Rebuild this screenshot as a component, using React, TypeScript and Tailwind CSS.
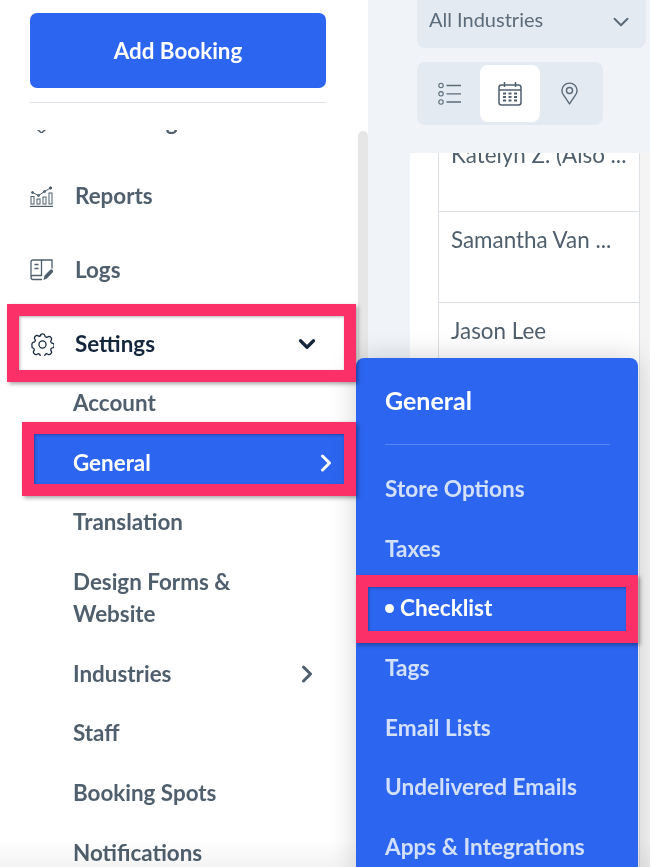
import { ChevronDown, ChevronRight } from "lucide-react";

const font = "font-['Lato','Noto_Sans',sans-serif]";

const subItems = ["Account", "General", "Translation", "Design Forms & Website", "Industries", "Staff", "Booking Spots", "Notifications"];
const flyoutItems = ["Store Options", "Taxes", "Checklist", "Tags", "Email Lists", "Undelivered Emails", "Apps & Integrations"];

function ReportsIcon() {
  return (
    <svg width="23" height="21" viewBox="0 0 23 21" fill="none" stroke="#4f5f6d" strokeWidth="1">
      <path d="M0 20.4h23" strokeWidth="1.2" />
      <rect x="1" y="10.5" width="3" height="7.5" />
      <rect x="7" y="13" width="3" height="5" />
      <rect x="13" y="11" width="3" height="7" />
      <rect x="19" y="7" width="3" height="11" />
      <path d="M2.5 6.5 8.5 9.5 14.5 5.5 20.5 2" />
      <circle cx="2.5" cy="6.5" r="1" fill="#4f5f6d" />
      <circle cx="8.5" cy="9.5" r="1" fill="#4f5f6d" />
      <circle cx="14.5" cy="5.5" r="1" fill="#4f5f6d" />
      <circle cx="20.5" cy="2" r="1.2" fill="#4f5f6d" />
    </svg>
  );
}

function LogsIcon() {
  return (
    <svg width="23" height="22" viewBox="0 0 23 22" fill="none" stroke="#4f5f6d" strokeWidth="1.3">
      <path d="M1 18V3a2 2 0 0 1 2-2h8.5v15.5H3a2 2 0 0 0-2 2 2 2 0 0 0 2 2h9" />
      <path d="M11.5 1H22v8.5" />
      <path d="M4.5 5.5h4M4.5 9.5h4" />
      <path d="M13.5 21l1-4.5 5.5-5.5a1.8 1.8 0 0 1 2.6 2.6L17 19.5z" fill="#4f5f6d" stroke="none" />
    </svg>
  );
}

function GearIcon() {
  return (
    <svg width="23" height="23" viewBox="0 0 24 24" fill="none" stroke="#14273d" strokeWidth="1.3" strokeLinejoin="round">
      <circle cx="12" cy="12" r="3.7" />
      <path d="M9.7 2.2c.3-1 1.6-1.3 2.3-1.3s2 .3 2.3 1.3l.5 1.7 1.7.7 1.6-.8c.9-.5 2 .2 2.5.7s1.2 1.6.7 2.5l-.8 1.6.7 1.7 1.7.5c1 .3 1.3 1.6 1.3 2.3s-.3 2-1.3 2.3l-1.7.5-.7 1.7.8 1.6c.5.9-.2 2-.7 2.5s-1.6 1.2-2.5.7l-1.6-.8-1.7.7-.5 1.7c-.3 1-1.6 1.3-2.3 1.3s-2-.3-2.3-1.3l-.5-1.7-1.7-.7-1.6.8c-.9.5-2-.2-2.5-.7s-1.2-1.6-.7-2.5l.8-1.6-.7-1.7-1.7-.5C1.2 14 .9 12.7.9 12s.3-2 1.3-2.3l1.7-.5.7-1.7-.8-1.6c-.5-.9.2-2 .7-2.5s1.6-1.2 2.5-.7l1.6.8 1.7-.7z" />
    </svg>
  );
}

function ListIcon() {
  return (
    <svg width="24" height="24" viewBox="0 0 24 24" fill="none" stroke="#5b6b79" strokeWidth="1.1">
      <circle cx="3" cy="3.5" r="2.2" />
      <circle cx="3" cy="11.8" r="2.2" />
      <circle cx="3" cy="20" r="2.2" />
      <path d="M8.5 3.5H23M8.5 11.8H23M8.5 20H23" strokeWidth="1.3" />
    </svg>
  );
}

function CalendarIcon() {
  return (
    <svg width="24" height="24" viewBox="0 0 24 24" fill="none" stroke="#4f5f6d" strokeWidth="1.5">
      <rect x="1" y="3" width="22" height="20" rx="2.5" />
      <path d="M1 8h22M6.5 0v5M17.5 0v5" />
      <path d="M5 11.5h3M10.5 11.5h3M16 11.5h3M5 15h3M10.5 15h3M16 15h3M5 18.5h3M10.5 18.5h3M16 18.5h3" strokeWidth="2" />
    </svg>
  );
}

function PinIcon() {
  return (
    <svg width="17" height="23" viewBox="0 0 18 24" fill="none" stroke="#5b6b79" strokeWidth="1.5" strokeLinejoin="round">
      <path d="M9 23 2.6 13.5A8 8 0 0 1 1 8.8C1 4.400 4.600 1 9 1s8 3.400 8 7.800a8 8 0 0 1-1.600 4.700z" />
      <circle cx="9" cy="8.800" r="3.200" />
    </svg>
  );
}

export default function App() {
  return (
    <div className={`${font} relative flex h-[867px] w-[650px] overflow-hidden bg-white`}>
      {/* Sidebar */}
      <aside className="flex h-full w-[368px] shrink-0 flex-col bg-white pl-[30px]">
        <button className="mt-[13px] h-[75px] w-[296px] rounded-[7px] bg-[#2c65f0] text-[22.4px] font-bold text-white">
          Add Booking
        </button>
        <div className="mt-[14px] h-px w-[296px] bg-[#e1e4ea]" />

        <div className="relative mt-[27px] flex-1 overflow-hidden">
          <div className="absolute right-0 top-[1px] bottom-0 w-[10px] rounded-t-[5px] bg-[#e6e6e6]" />
          {/* list is scrolled, only the tail of the first row peeks out */}
          <div className="-mt-[45px] flex flex-col text-[22.4px] font-bold text-[#4f5f6d]">
            <div className="flex h-[74px] w-[296px] items-center gap-[22px]">
              <svg width="23" height="22" viewBox="0 0 23 22" fill="none" stroke="#4f5f6d" strokeWidth="1.5">
                <path d="M7 18l4.500 4 4.500-4" />
              </svg>
              <span>Marketing</span>
              <ChevronRight className="ml-auto mr-[14px]" size={26} strokeWidth={2.6} />
            </div>
            <div className="flex h-[74px] items-center gap-[22px]">
              <ReportsIcon />
              <span>Reports</span>
            </div>
            <div className="flex h-[74px] items-center gap-[22px]">
              <LogsIcon />
              <span>Logs</span>
            </div>
            <div className="flex h-[74px] w-[296px] items-center gap-[21px] pl-[1px] text-[#14273d]">
              <GearIcon />
              <span>Settings</span>
              <ChevronDown className="ml-auto mr-[6px] text-[#14273d]" size={26} strokeWidth={3} />
            </div>
            <div className="-mt-[8px] flex flex-col pl-[43px]">
              {subItems.map((item) =>
                item === "General" ? (
                  <div key={item} className="relative -ml-[39px] flex h-[59.7px] w-[320px] items-center justify-between bg-[#2c65f0] pl-[39px] pr-[14px] text-white">
                    <span>{item}</span>
                    <ChevronRight size={28} strokeWidth={2.6} />
                  </div>
                ) : (
                  <div key={item} className="flex w-[253px] items-center justify-between py-[13.85px] leading-[32px]">
                    <span>{item === "Design Forms & Website" ? <>Design Forms &<br />Website</> : item}</span>
                    {item === "Industries" && <ChevronRight className="mr-[5px]" size={28} strokeWidth={2.6} />}
                  </div>
                )
              )}
            </div>
          </div>
        </div>
      </aside>

      {/* Right pane */}
      <main className="flex h-full flex-1 flex-col bg-[#f0f4f8] text-[#5b6b79]">
        <div className="flex h-[153px] flex-col pl-[49px] pr-[4px]">
          <div className="flex h-[48px] items-start justify-between rounded-b-[8px] bg-[#e4eaf1] pl-[12px] pr-[12px] pt-[4px] text-[20px]">
            <span>All Industries</span>
            <ChevronDown className="mt-[5px]" size={26} strokeWidth={1.8} />
          </div>
          <div className="mt-[14px] flex h-[63px] w-[186px] items-center rounded-[8px] bg-[#e4eaf1]">
            <div className="flex w-[63px] justify-center pl-[2px]"><ListIcon /></div>
            <div className="flex h-[57px] w-[60px] items-center justify-center rounded-[8px] bg-white"><CalendarIcon /></div>
            <div className="flex w-[63px] justify-center pr-[4px]"><PinIcon /></div>
          </div>
        </div>
        <div className="ml-[42px] flex-1 overflow-hidden bg-white pl-[28px]">
          <div className="h-full w-[202px] border-x border-[#dcdfe3] text-[22.4px] leading-[32px] text-[#4f5f6d]">
            <div className="h-[59px] overflow-hidden border-b border-[#dcdfe3] pl-[12px]">
              <div className="-mt-[14px]">Katelyn Z. (Also ...</div>
            </div>
            <div className="h-[91px] border-b border-[#dcdfe3] pl-[12px] pt-[12px]">Samantha Van ...</div>
            <div className="pl-[12px] pt-[12px]">Jason Lee</div>
          </div>
        </div>
      </main>
      <div className="absolute right-0 top-[153px] bottom-0 w-[10px] bg-[#f4f4f4]" />

      {/* Fade along the bottom edge */}
      <div className="absolute inset-x-0 bottom-0 h-[26px] bg-gradient-to-b from-transparent to-[#f3f3f3] mix-blend-multiply" />

      {/* Flyout menu */}
      <div className="absolute left-[356px] top-[358px] h-[520px] w-[282px] rounded-[8px] bg-[#2c65f0] pl-[29px] pr-[28px] shadow-[0_0_28px_rgba(0,0,0,0.18)]">
        <div className="pt-[26px] text-[25px] font-bold leading-[32px] text-white">General</div>
        <div className="mt-[28px] h-px bg-[#5a86f3]" />
        <div className="mt-[14px] flex flex-col text-[22.6px] font-bold leading-[32px] text-[#d3e0fc]">
          {flyoutItems.map((item) => (
            <div key={item} className="flex h-[59.7px] items-center">
              {item === "Checklist" ? (
                <span className="flex items-center gap-[6px] text-white">
                  <span className="h-[9px] w-[9px] rounded-full bg-white" />
                  {item}
                </span>
              ) : (
                item
              )}
            </div>
          ))}
        </div>
      </div>

      {/* Pink annotation boxes */}
      <div className="absolute left-[7px] top-[304px] h-[78px] w-[349px] border-[12px] border-[#fb3069] shadow-[2px_2px_4px_rgba(0,0,0,0.35),inset_1px_1px_3px_rgba(0,0,0,0.3)]" />
      <div className="absolute left-[22px] top-[422px] h-[74px] w-[334px] border-[12px] border-[#fb3069] shadow-[2px_2px_4px_rgba(0,0,0,0.35),inset_1px_1px_3px_rgba(0,0,0,0.3)]" />
      <div className="absolute left-[356px] top-[575px] h-[68px] w-[282px] border-[12px] border-[#fb3069] shadow-[2px_2px_4px_rgba(0,0,0,0.35),inset_1px_1px_3px_rgba(0,0,0,0.3)]" />
    </div>
  );
}
